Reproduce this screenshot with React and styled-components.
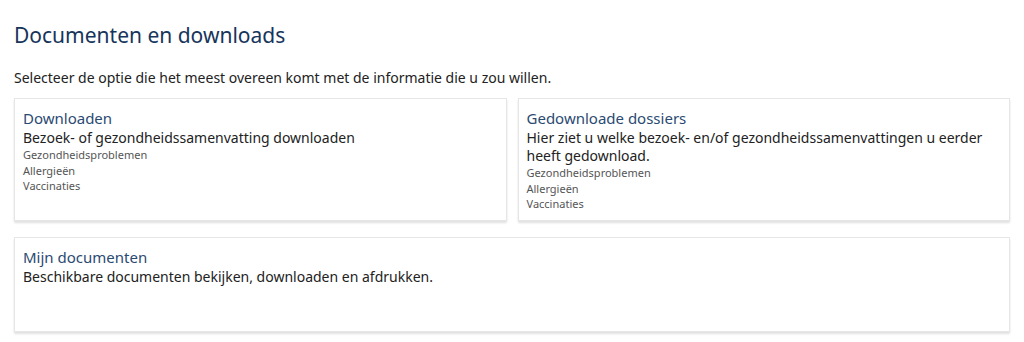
import React from 'react';
import styled, { createGlobalStyle } from 'styled-components';

const GlobalStyle = createGlobalStyle`
  body {
    margin: 0;
    background: #fff;
    font-family: "Noto Sans", "Open Sans", sans-serif;
  }
`;

const cards = [
    {
        title: 'Downloaden',
        text: 'Bezoek- of gezondheidssamenvatting downloaden',
        items: ['Gezondheidsproblemen', 'Allergieën', 'Vaccinaties'],
    },
    {
        title: 'Gedownloade dossiers',
        text: 'Hier ziet u welke bezoek- en/of gezondheidssamenvattingen u eerder heeft gedownload.',
        items: ['Gezondheidsproblemen', 'Allergieën', 'Vaccinaties'],
    },
    {
        title: 'Mijn documenten',
        text: 'Beschikbare documenten bekijken, downloaden en afdrukken.',
        items: [],
        wide: true,
    },
];

const App = () => {
    return (
        <Page>
            <GlobalStyle />
            <Heading>Documenten en downloads</Heading>
            <Intro>Selecteer de optie die het meest overeen komt met de informatie die u zou willen.</Intro>
            <CardGrid>
                {cards.map((card) => (
                    <Card key={card.title} $wide={card.wide}>
                        <CardTitle>{card.title}</CardTitle>
                        <CardText>{card.text}</CardText>
                        {card.items.map((item) => (
                            <CardItem key={item}>{item}</CardItem>
                        ))}
                    </Card>
                ))}
            </CardGrid>
        </Page>
    )
}
export default App

const Page = styled.div`
padding: 21px 14px 10px 14px;
`

const Heading = styled.h1`
margin: 0;
font-size: 21px;
font-weight: 400;
line-height: 28px;
color: #17355b;
`

const Intro = styled.p`
margin: 20px 0 0 0;
font-size: 14px;
line-height: 18px;
color: #222;
`

const CardGrid = styled.div`
display: grid;
grid-template-columns: 1fr 1fr;
column-gap: 11px;
row-gap: 16px;
margin-top: 11px;
width: 996px;
`

const Card = styled.div`
grid-column: ${(p) => (p.$wide ? '1 / span 2' : 'auto')};
min-height: ${(p) => (p.$wide ? '95px' : '123px')};
box-sizing: border-box;
padding: 9px 9px 8px 8px;
border: 1px solid #e6e6e6;
box-shadow: 0 2px 2px rgba(0, 0, 0, 0.12);
background: #fff;
`

const CardTitle = styled.div`
font-size: 15px;
line-height: 20px;
color: #2b4a72;
`

const CardText = styled.div`
font-size: 14px;
line-height: 18px;
color: #222;
margin-top: 1px;
`

const CardItem = styled.div`
font-size: 11px;
line-height: 15.5px;
color: #555;
`
